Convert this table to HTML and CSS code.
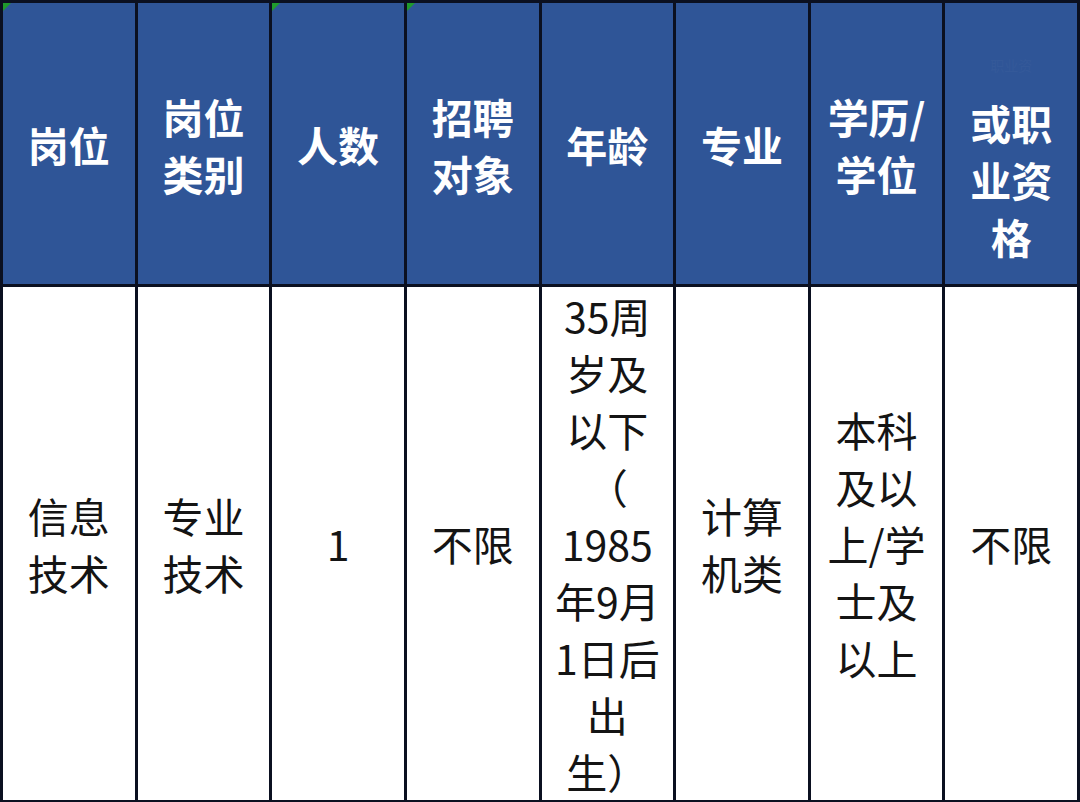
FILE: index.html
```html
<!DOCTYPE html>
<html lang="zh-CN">
<head>
<meta charset="utf-8">
<link rel="stylesheet" href="styles.css">
</head>
<body>
<table class="jobs">
  <colgroup>
    <col class="c"><col class="c"><col class="c"><col class="c"><col class="c"><col class="c"><col class="c"><col class="c">
  </colgroup>
  <thead>
    <tr>
      <th class="mark">岗位</th>
      <th>岗位<br>类别</th>
      <th class="mark">人数</th>
      <th class="mark">招聘<br>对象</th>
      <th>年龄</th>
      <th>专业</th>
      <th>学历/<br>学位</th>
      <th><span class="ghost">职业资</span><br>或职<br>业资<br>格</th>
    </tr>
  </thead>
  <tbody>
    <tr>
      <td>信息<br>技术</td>
      <td>专业<br>技术</td>
      <td>1</td>
      <td>不限</td>
      <td>35周<br>岁及<br>以下<br>（<br>1985<br>年9月<br>1日后<br>出<br>生）</td>
      <td>计算<br>机类</td>
      <td>本科<br>及以<br>上/学<br>士及<br>以上</td>
      <td>不限</td>
    </tr>
  </tbody>
</table>
</body>
</html>
```

FILE: styles.css
```css
html, body {
  margin: 0;
  padding: 0;
  background: #ffffff;
}

.jobs {
  width: 1080px;
  border-collapse: collapse;
  table-layout: fixed;
  font-family: "Noto Sans CJK SC", "Noto Sans", sans-serif;
}

.jobs th,
.jobs td {
  border: 3px solid #0b1020;
  text-align: center;
  vertical-align: middle;
  padding: 0;
  font-size: 41px;
  line-height: 57px;
  position: relative;
}

.jobs th {
  background: #2f5597;
  color: #ffffff;
  font-weight: 700;
  height: 279px;
  padding-top: 2px;
}

.jobs td {
  background: #ffffff;
  color: #141414;
  font-weight: 400;
  height: 510px;
  padding-top: 0;
}

.jobs th.mark::before {
  content: "";
  position: absolute;
  left: 0;
  top: 0;
  width: 0;
  height: 0;
  border-top: 8px solid #1f9a2c;
  border-right: 8px solid transparent;
}

.ghost {
  color: #3a5e9c;
  font-size: 14px;
  font-weight: 400;
  opacity: 0.5;
}
```
